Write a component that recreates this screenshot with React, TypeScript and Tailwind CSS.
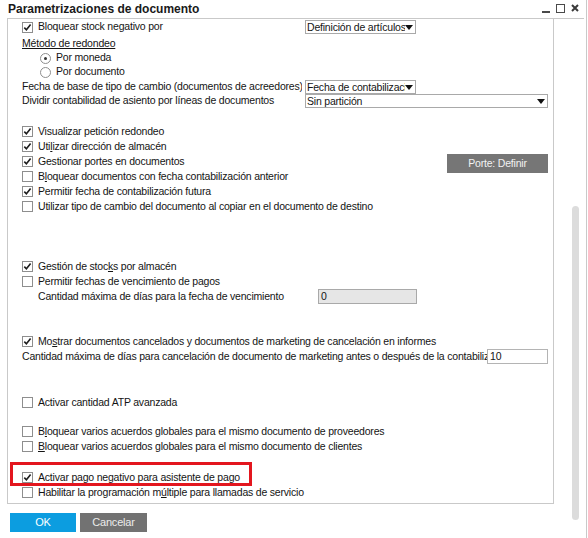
import type { ReactNode } from 'react';

function Check({ checked }: { checked?: boolean }) {
    return (
        <span className="w-[11px] h-[11px] border border-[#8e8e8e] bg-white flex items-center justify-center shrink-0">
            {checked && (
                <svg width="9" height="9" viewBox="0 0 9 9">
                    <path d="M1.3 4.6 L3.4 6.8 L7.6 1.6" stroke="#1e1e1e" strokeWidth="1.6" fill="none" />
                </svg>
            )}
        </span>
    );
}

function Radio({ checked }: { checked?: boolean }) {
    return (
        <span className="w-[11px] h-[11px] rounded-full border border-[#8e8e8e] bg-white flex items-center justify-center shrink-0">
            {checked && <span className="w-[3px] h-[3px] rounded-full bg-[#333]" />}
        </span>
    );
}

function Caret() {
    return (
        <svg width="8" height="5" viewBox="0 0 8 5" className="shrink-0">
            <path d="M0 0 H8 L4 5 Z" fill="#111" />
        </svg>
    );
}

function Select({ value, className }: { value: string; className: string }) {
    return (
        <div className={`h-[14px] border border-[#a9a9a9] bg-white flex items-center pl-[1px] pr-[2px] ${className}`}>
            <span className="flex-1 overflow-hidden whitespace-nowrap leading-[12px]">{value}</span>
            <Caret />
        </div>
    );
}

function CheckRow({ checked, children, className = '' }: { checked?: boolean; children: ReactNode; className?: string }) {
    return (
        <div className={`h-[15px] flex items-center gap-[5px] ${className}`}>
            <Check checked={checked} />
            <span className="whitespace-nowrap">{children}</span>
        </div>
    );
}

export default function App() {
    return (
        <div className="w-[588px] h-[538px] bg-white text-[10.5px] tracking-[-0.2px] text-[#141414] font-['Liberation_Sans',Arial,sans-serif] overflow-hidden">
            <div className="w-[587px] h-full border-r border-[#c9c9c9]">
                <div className="ml-[7px] w-[577px] h-[19px] border-b border-[#c9c9c9] flex items-center justify-between">
                    <span className="pl-[1px] text-[12px] tracking-normal font-bold text-[#1a1a1a]">Parametrizaciones de documento</span>
                    <div className="flex items-center gap-[6px] pr-[5px] pb-[2px]">
                        <span className="w-[8px] h-[2px] bg-[#4a4a4a] mt-[8px]" />
                        <span className="w-[9px] h-[9px] border-[1.5px] border-[#4a4a4a]" />
                        <svg width="8" height="8" viewBox="0 0 8 8">
                            <path d="M1 1 L7 7 M7 1 L1 7" stroke="#3a3a3a" strokeWidth="2" />
                        </svg>
                    </div>
                </div>

                <div className="flex">
                    <div className="ml-[7px] w-[547px]">
                        <div className="h-[485px] border-x border-b border-[#c9c9c9] pl-[14px] pr-[5px] pt-[1px]">
                            {/* redondeo / tipo de cambio */}
                            <div className="h-[14px] flex items-center">
                                <div className="w-[283px] flex items-center gap-[5px]">
                                    <Check checked />
                                    <span>Bloquear stock negativo por</span>
                                </div>
                                <Select value="Definición de artículos" className="w-[111px]" />
                            </div>
                            <div className="h-[14px] mt-[3px] flex items-center">
                                <span className="underline">Método de redondeo</span>
                            </div>
                            <div className="h-[14px] flex items-center gap-[5px] pl-[18px]">
                                <Radio checked />
                                <span>Por moneda</span>
                            </div>
                            <div className="h-[14px] flex items-center gap-[5px] pl-[18px]">
                                <Radio />
                                <span>Por documento</span>
                            </div>
                            <div className="h-[14px] mt-[1px] flex items-center">
                                <span className="w-[280px] mr-[3px] overflow-hidden whitespace-nowrap">
                                    Fecha de base de tipo de cambio (documentos de acreedores)
                                </span>
                                <Select value="Fecha de contabilización" className="w-[111px]" />
                            </div>
                            <div className="h-[14px] flex items-center">
                                <span className="w-[283px] whitespace-nowrap">Dividir contabilidad de asiento por líneas de documentos</span>
                                <Select value="Sin partición" className="w-[243px]" />
                            </div>

                            {/* opciones de documento */}
                            <div className="mt-[16px]">
                                <CheckRow checked>Visualizar petición redondeo</CheckRow>
                                <CheckRow checked>
                                    Uti<span className="underline">l</span>izar dirección de almacén
                                </CheckRow>
                                <div className="h-[15px] flex items-center justify-between">
                                    <div className="flex items-center gap-[5px]">
                                        <Check checked />
                                        <span>Gestionar portes en documentos</span>
                                    </div>
                                    <button className="self-start w-[101px] h-[19px] bg-[#767676] text-[#f2f2f2] text-[10.5px]">
                                        Porte: Definir
                                    </button>
                                </div>
                                <CheckRow>
                                    B<span className="underline">l</span>oquear documentos con fecha contabilización anterior
                                </CheckRow>
                                <CheckRow checked>Permitir fecha de contabilización futura</CheckRow>
                                <CheckRow>Utilizar tipo de cambio del documento al copiar en el documento de destino</CheckRow>
                            </div>

                            {/* stocks y vencimientos */}
                            <div className="mt-[45px]">
                                <CheckRow checked>
                                    Gestión de stoc<span className="underline">k</span>s por almacén
                                </CheckRow>
                                <CheckRow>Permitir fechas de vencimiento de pagos</CheckRow>
                                <div className="h-[15px] flex items-center pl-[16px]">
                                    <span className="w-[280px] whitespace-nowrap">Cantidad máxima de días para la fecha de vencimiento</span>
                                    <div className="w-[99px] h-[15px] bg-[#e6e6e6] border border-[#a9a9a9] pl-[2px] leading-[13px]">0</div>
                                </div>
                            </div>

                            <div className="mt-[30px]">
                                <CheckRow checked>
                                    Mo<span className="underline">s</span>trar documentos cancelados y documentos de marketing de cancelación en informes
                                </CheckRow>
                                <div className="h-[15px] flex items-center">
                                    <span className="w-[465px] overflow-hidden whitespace-nowrap">
                                        Cantidad máxima de días para cancelación de documento de marketing antes o después de la contabilización
                                    </span>
                                    <div className="w-[61px] h-[15px] bg-white border border-[#b4b4b4] pl-[2px] leading-[13px]">10</div>
                                </div>
                            </div>

                            <CheckRow className="mt-[31px]">Activar cantidad ATP avanzada</CheckRow>

                            <div className="mt-[14px]">
                                <CheckRow>
                                    B<span className="underline">l</span>oquear varios acuerdos globales para el mismo documento de proveedores
                                </CheckRow>
                                <CheckRow>
                                    <span className="underline">B</span>loquear varios acuerdos globales para el mismo documento de clientes
                                </CheckRow>
                            </div>

                            <div className="mt-[16px]">
                                <div className="relative">
                                    <CheckRow checked>Activar pago negativo para asistente de pago</CheckRow>
                                    <div className="absolute left-[-12px] top-[-8px] w-[242px] h-[24px] border-[3px] border-[#e3161e]" />
                                </div>
                                <CheckRow>
                                    Habilitar la programación m<span className="underline">ú</span>ltiple para llamadas de servicio
                                </CheckRow>
                            </div>
                        </div>

                        <div className="mt-[9px] ml-[3px] flex gap-[4px]">
                            <button className="w-[66px] h-[19px] bg-[#0c9de0] text-white text-[11px]">OK</button>
                            <button className="w-[67px] h-[19px] bg-[#727272] text-[#ececec] text-[11px]">Cancelar</button>
                        </div>
                    </div>

                    <div className="flex-1">
                        <div className="ml-[18px] mt-[187px] w-[7px] h-[314px] rounded-full bg-[#dcdcdc]" />
                    </div>
                </div>
            </div>
        </div>
    );
}
